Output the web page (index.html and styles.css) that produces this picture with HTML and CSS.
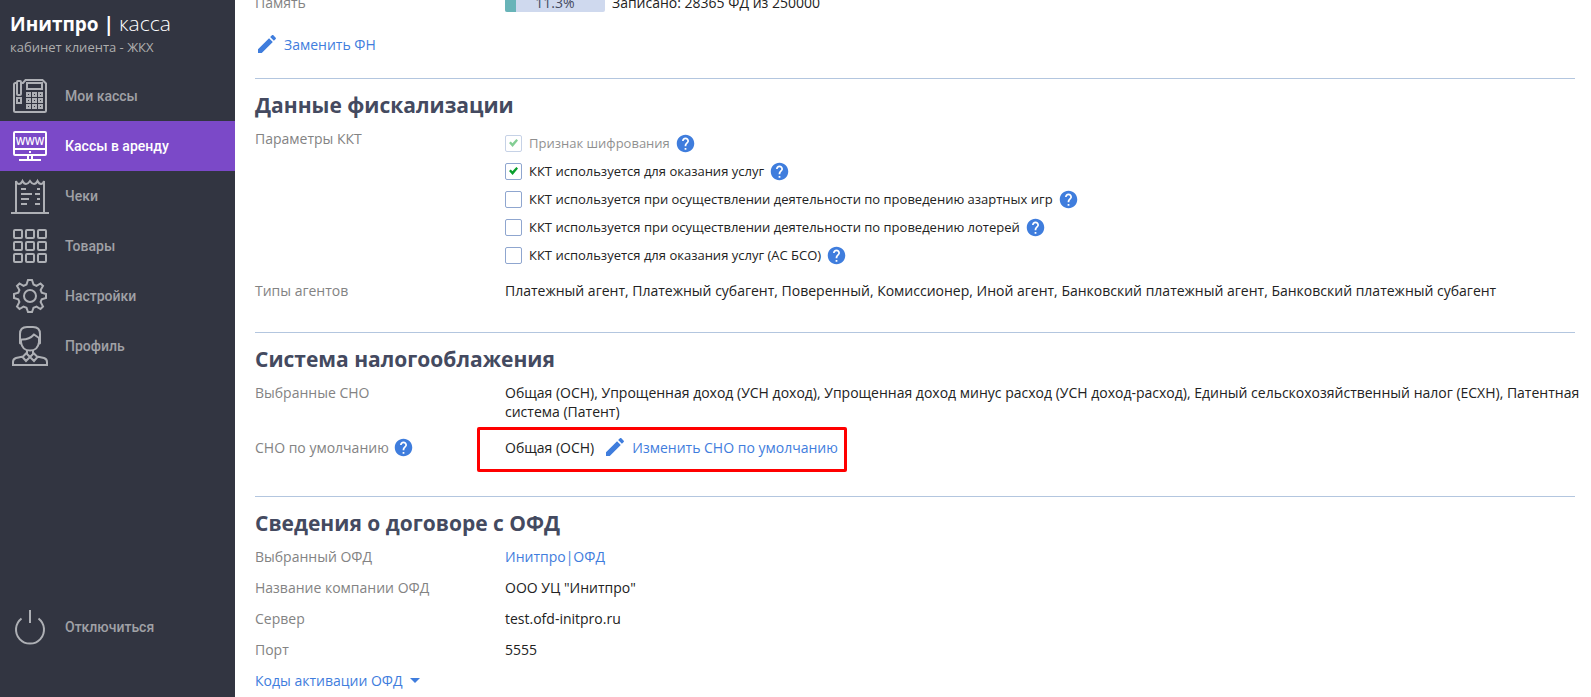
FILE: index.html
```html
<!DOCTYPE html>
<html lang="ru">
<head>
    <meta charset="UTF-8">
    <meta name="viewport" content="width=device-width, initial-scale=1.0">
    <title>Инитпро | касса</title>
    <link rel="stylesheet" href="styles.css">
</head>
<body>
    <svg class="sprite" aria-hidden="true">
        <symbol id="icon-help" viewBox="0 0 24 24">
            <path d="M12 2C6.48 2 2 6.48 2 12s4.48 10 10 10 10-4.48 10-10S17.52 2 12 2zm1 17h-2v-2h2v2zm2.07-7.75l-.9.92C13.45 12.9 13 13.5 13 15h-2v-.5c0-1.1.45-2.1 1.17-2.83l1.24-1.26c.37-.36.59-.86.59-1.41 0-1.1-.9-2-2-2s-2 .9-2 2H8c0-2.210 1.790-4 4-4s4 1.790 4 4c0 .88-.36 1.680-.93 2.250z"/>
        </symbol>
        <symbol id="icon-edit" viewBox="0 0 24 24">
            <path d="M3 17.250V21h3.750L17.810 9.940l-3.750-3.750L3 17.250zM20.710 7.040c.39-.39.39-1.020 0-1.410l-2.340-2.340c-.39-.39-1.020-.39-1.410 0l-1.830 1.830 3.750 3.750 1.830-1.830z"/>
        </symbol>
    </svg>
    <div class="layout">
        <aside class="sidebar">
            <div class="brand">
                <div class="brand-name">Инитпро | <span>касса</span></div>
                <div class="brand-sub">кабинет клиента - ЖКХ</div>
            </div>
            <nav class="menu">
                <a class="menu-item" href="#">
                    <svg class="menu-icon" viewBox="0 0 40 40">
                        <path d="M7 7H5.500Q4 7 4 8.500V34.500Q4 36 5.500 36H34.500Q36 36 36 34.500V7.500L32.500 4H15.500L13 7H11"/>
                        <rect x="7" y="5" width="4" height="14" rx="1"/>
                        <rect x="7" y="22" width="4" height="5"/>
                        <rect x="17" y="7" width="15" height="6"/>
                        <path d="M17 17h3v3h-3zM23 17h3v3h-3zM29 17h3v3h-3zM17 23h3v3h-3zM23 23h3v3h-3zM29 23h3v3h-3zM17 29h3v3h-3zM23 29h3v3h-3zM29 29h3v3h-3z"/>
                    </svg>
                    Мои кассы
                </a>
                <a class="menu-item active" href="#">
                    <svg class="menu-icon" viewBox="0 0 40 40">
                        <rect x="4" y="6" width="32" height="23" rx="1"/>
                        <path d="M4 23H36M18 29v5M22 29v5M9 34H31M19 26h2"/>
                        <text x="20" y="19" text-anchor="middle">WWW</text>
                    </svg>
                    Кассы в аренду
                </a>
                <a class="menu-item" href="#">
                    <svg class="menu-icon" viewBox="0 0 40 40">
                        <path d="M1 37H39M6 37V5Q7 8 9 8Q11 8 12.500 5Q14 8 16 8Q18 8 20 5Q22 8 24 8Q26 8 27.500 5Q29 8 31 8Q33 8 34 5V37"/>
                        <path d="M11 13h5M11 18h11M11 23h8M11 28h6M27 13h3M25 18h5M27 23h3M25 28h5"/>
                    </svg>
                    Чеки
                </a>
                <a class="menu-item" href="#">
                    <svg class="menu-icon" viewBox="0 0 40 40">
                        <rect x="4" y="4" width="8" height="8" rx="1"/>
                        <rect x="16" y="4" width="8" height="8" rx="1"/>
                        <rect x="28" y="4" width="8" height="8" rx="1"/>
                        <rect x="4" y="16" width="8" height="8" rx="1"/>
                        <rect x="16" y="16" width="8" height="8" rx="1"/>
                        <rect x="28" y="16" width="8" height="8" rx="1"/>
                        <rect x="4" y="28" width="8" height="8" rx="1"/>
                        <rect x="16" y="28" width="8" height="8" rx="1"/>
                        <rect x="28" y="28" width="8" height="8" rx="1"/>
                    </svg>
                    Товары
                </a>
                <a class="menu-item" href="#">
                    <svg class="menu-icon" viewBox="0 0 40 40">
                        <circle cx="20" cy="20" r="6"/>
                        <path d="M18 4H22L23.500 8.500L26.500 9.800L30.500 7.500L33 10L30.600 14L31.700 16.700L36 18V22L31.700 23.300L30.600 26L33 30.500L30.500 33L26.500 30.600L23.500 31.700L22 36H18L16.500 31.700L13.500 30.600L9.500 33L7 30.500L9.400 26L8.300 23.300L4 22V18L8.300 16.700L9.400 14L7 10L9.500 7.500L13.500 9.800L16.500 8.500Z"/>
                    </svg>
                    Настройки
                </a>
                <a class="menu-item" href="#">
                    <svg class="menu-icon" viewBox="0 0 40 40">
                        <path d="M11 18L10 17V8Q10 1 17 1H23Q30 1 30 8V17L29 18"/>
                        <path d="M11 14V16Q12 24.500 20 24.500T29 16V12L24 8.500Q19 14 11 13.500"/>
                        <path d="M17 24V28L20 31L23 28V24M16.500 27L12.500 31L16 35L20 31L24 35L27.500 31L23.500 27M13 30.500L6 32Q3 33 3 36V39H37V36Q37 33 34 32L27 30.500"/>
                    </svg>
                    Профиль
                </a>
            </nav>
            <a class="menu-item logout" href="#">
                <svg class="menu-icon" viewBox="0 0 40 40">
                    <path d="M20 3V16M11.500 11.500A14 14 0 1 0 28.500 11.500"/>
                </svg>
                Отключиться
            </a>
        </aside>

        <main class="content">
            <section class="section section-first">
                <div class="row">
                    <div class="label">Память</div>
                    <div class="value memory">
                        <div class="progress">
                            <div class="progress-bar" style="width: 11.3%"></div>
                            <span class="progress-text">11.3%</span>
                        </div>
                        <span>Записано: 28365 ФД из 250000</span>
                    </div>
                </div>
                <a class="edit-link" href="#"><svg class="icon-edit"><use href="#icon-edit"/></svg>Заменить ФН</a>
            </section>

            <section class="section">
                <h2 class="title">Данные фискализации</h2>
                <div class="row">
                    <div class="label">Параметры ККТ</div>
                    <div class="value">
                        <div class="check">
                            <input type="checkbox" id="encrypt" checked disabled>
                            <label for="encrypt">Признак шифрования</label>
                            <svg class="icon-help"><use href="#icon-help"/></svg>
                        </div>
                        <div class="check">
                            <input type="checkbox" id="services" checked>
                            <label for="services">ККТ используется для оказания услуг</label>
                            <svg class="icon-help"><use href="#icon-help"/></svg>
                        </div>
                        <div class="check">
                            <input type="checkbox" id="gambling">
                            <label for="gambling">ККТ используется при осуществлении деятельности по проведению азартных игр</label>
                            <svg class="icon-help"><use href="#icon-help"/></svg>
                        </div>
                        <div class="check">
                            <input type="checkbox" id="lottery">
                            <label for="lottery">ККТ используется при осуществлении деятельности по проведению лотерей</label>
                            <svg class="icon-help"><use href="#icon-help"/></svg>
                        </div>
                        <div class="check">
                            <input type="checkbox" id="bso">
                            <label for="bso">ККТ используется для оказания услуг (АС БСО)</label>
                            <svg class="icon-help"><use href="#icon-help"/></svg>
                        </div>
                    </div>
                </div>
                <div class="row">
                    <div class="label">Типы агентов</div>
                    <div class="value">Платежный агент, Платежный субагент, Поверенный, Комиссионер, Иной агент, Банковский платежный агент, Банковский платежный субагент</div>
                </div>
            </section>

            <section class="section">
                <h2 class="title">Система налогооблажения</h2>
                <div class="row">
                    <div class="label">Выбранные СНО</div>
                    <div class="value">Общая (ОСН), Упрощенная доход (УСН доход), Упрощенная доход минус расход (УСН доход-расход), Единый сельскохозяйственный налог (ЕСХН), Патентная система (Патент)</div>
                </div>
                <div class="row row-default">
                    <div class="label">СНО по умолчанию<svg class="icon-help"><use href="#icon-help"/></svg></div>
                    <div class="value marked">
                        <span>Общая (ОСН)</span>
                        <a class="edit-link" href="#"><svg class="icon-edit"><use href="#icon-edit"/></svg>Изменить СНО по умолчанию</a>
                    </div>
                </div>
            </section>

            <section class="section">
                <h2 class="title">Сведения о договоре с ОФД</h2>
                <div class="row">
                    <div class="label">Выбранный ОФД</div>
                    <div class="value"><a href="#">Инитпро|ОФД</a></div>
                </div>
                <div class="row">
                    <div class="label">Название компании ОФД</div>
                    <div class="value">ООО УЦ "Инитпро"</div>
                </div>
                <div class="row">
                    <div class="label">Сервер</div>
                    <div class="value">test.ofd-initpro.ru</div>
                </div>
                <div class="row">
                    <div class="label">Порт</div>
                    <div class="value">5555</div>
                </div>
                <button class="toggle" type="button">Коды активации ОФД</button>
            </section>
        </main>
    </div>
</body>
</html>
```
FILE: styles.css
```css
* {
    box-sizing: border-box;
}
body {
    margin: 0;
    font-family: "Open Sans", sans-serif;
    font-size: 14px;
    line-height: 19px;
    color: #222;
    background-color: #fff;
}
a {
    color: #3f7ddd;
    text-decoration: none;
}
.sprite {
    display: none;
}
.layout {
    display: flex;
    min-height: 100vh;
}

/* Sidebar */
.sidebar {
    display: flex;
    flex-direction: column;
    flex-shrink: 0;
    width: 235px;
    padding-bottom: 45px;
    background-color: #323541;
}
.brand {
    height: 71px;
    padding: 9px 10px 0;
}
.brand-name {
    font-size: 19px;
    line-height: 28px;
    font-weight: 700;
    color: #fff;
}
.brand-name span {
    font-size: 21px;
    font-weight: 300;
}
.brand-sub {
    font-size: 13px;
    line-height: 18px;
    color: #aeaeae;
}
.menu-item {
    display: flex;
    align-items: center;
    gap: 15px;
    height: 50px;
    padding: 0 10px;
    font-family: Roboto, sans-serif;
    font-weight: 500;
    color: #a0a1a6;
}
.menu-item.active {
    background-color: #7b49c8;
    color: #fff;
}
.logout {
    margin-top: auto;
}
.menu-icon {
    width: 40px;
    height: 40px;
    fill: none;
    stroke: #aeb0b5;
    stroke-width: 2;
}
.active .menu-icon {
    stroke: #fff;
}
.menu-icon text {
    font-family: "Open Sans", sans-serif;
    font-size: 10px;
    font-weight: 600;
    fill: #fff;
    stroke: none;
}

/* Content */
.content {
    flex: 1;
    min-width: 0;
    padding: 0 16px 0 20px;
    overflow: hidden;
}
.section {
    padding: 11px 0 20px;
    border-bottom: 1px solid #b3c6df;
}
.section:last-child {
    padding-bottom: 0;
    border-bottom: none;
}
/* the card starts above the scrolled edge */
.section-first {
    margin-top: -18px;
    padding-bottom: 18px;
}
.title {
    margin: 0 0 9px;
    font-size: 21px;
    line-height: 30px;
    font-weight: 700;
    color: #444a60;
}
.row {
    display: flex;
    margin-bottom: 12px;
}
.label {
    flex: 0 0 250px;
    color: #838383;
}
.value {
    flex: 1;
    min-width: 0;
    margin-right: -10px;
}
.memory {
    display: flex;
    gap: 7px;
}
.progress {
    position: relative;
    width: 100px;
    height: 19px;
    border-radius: 2px;
    background-color: #cfd9ee;
    overflow: hidden;
}
.progress-bar {
    height: 100%;
    background-color: #68b4b8;
}
.progress-text {
    position: absolute;
    top: 0;
    left: 0;
    width: 100%;
    text-align: center;
    color: #444a60;
}
.edit-link {
    display: inline-flex;
    align-items: center;
    gap: 5px;
    height: 28px;
}
.section-first .edit-link {
    margin-top: 6px;
}
.icon-edit {
    width: 24px;
    height: 24px;
    fill: #3f7ddd;
}
.icon-help {
    flex-shrink: 0;
    width: 21px;
    height: 21px;
    fill: #3f7ddd;
}

.check {
    display: flex;
    align-items: center;
    height: 28px;
    font-size: 13px;
}
.check input {
    display: grid;
    place-content: center;
    appearance: none;
    width: 17px;
    height: 17px;
    margin: 0 7px 0 0;
    border: 1px solid #8fa6cf;
    border-radius: 2px;
    background-color: #fff;
}
.check input:checked::before {
    content: "";
    width: 9px;
    height: 8px;
    background-color: #0a9f2c;
    clip-path: polygon(0 50%, 20% 30%, 38% 52%, 82% 0, 100% 18%, 40% 100%);
}
.check input:disabled,
.check input:disabled + label {
    opacity: 0.5;
}
.check label {
    margin-right: 5px;
}

.row-default {
    align-items: center;
    margin-bottom: 15px;
}
.row-default .label {
    display: flex;
    align-items: center;
    gap: 4px;
}
.marked {
    display: flex;
    align-items: center;
    gap: 9px;
    flex: none;
    position: relative;
}
.marked::after {
    content: "";
    position: absolute;
    inset: -6px -9px -11px -28px;
    border: 3px solid #f00;
    border-radius: 2px;
    pointer-events: none;
}

.toggle {
    display: flex;
    align-items: center;
    gap: 7px;
    padding: 0;
    border: none;
    background: none;
    font: inherit;
    color: #3f7ddd;
    cursor: pointer;
}
.toggle::after {
    content: "";
    border: 5px solid transparent;
    border-top-color: #3f7ddd;
    border-bottom: none;
}
```
